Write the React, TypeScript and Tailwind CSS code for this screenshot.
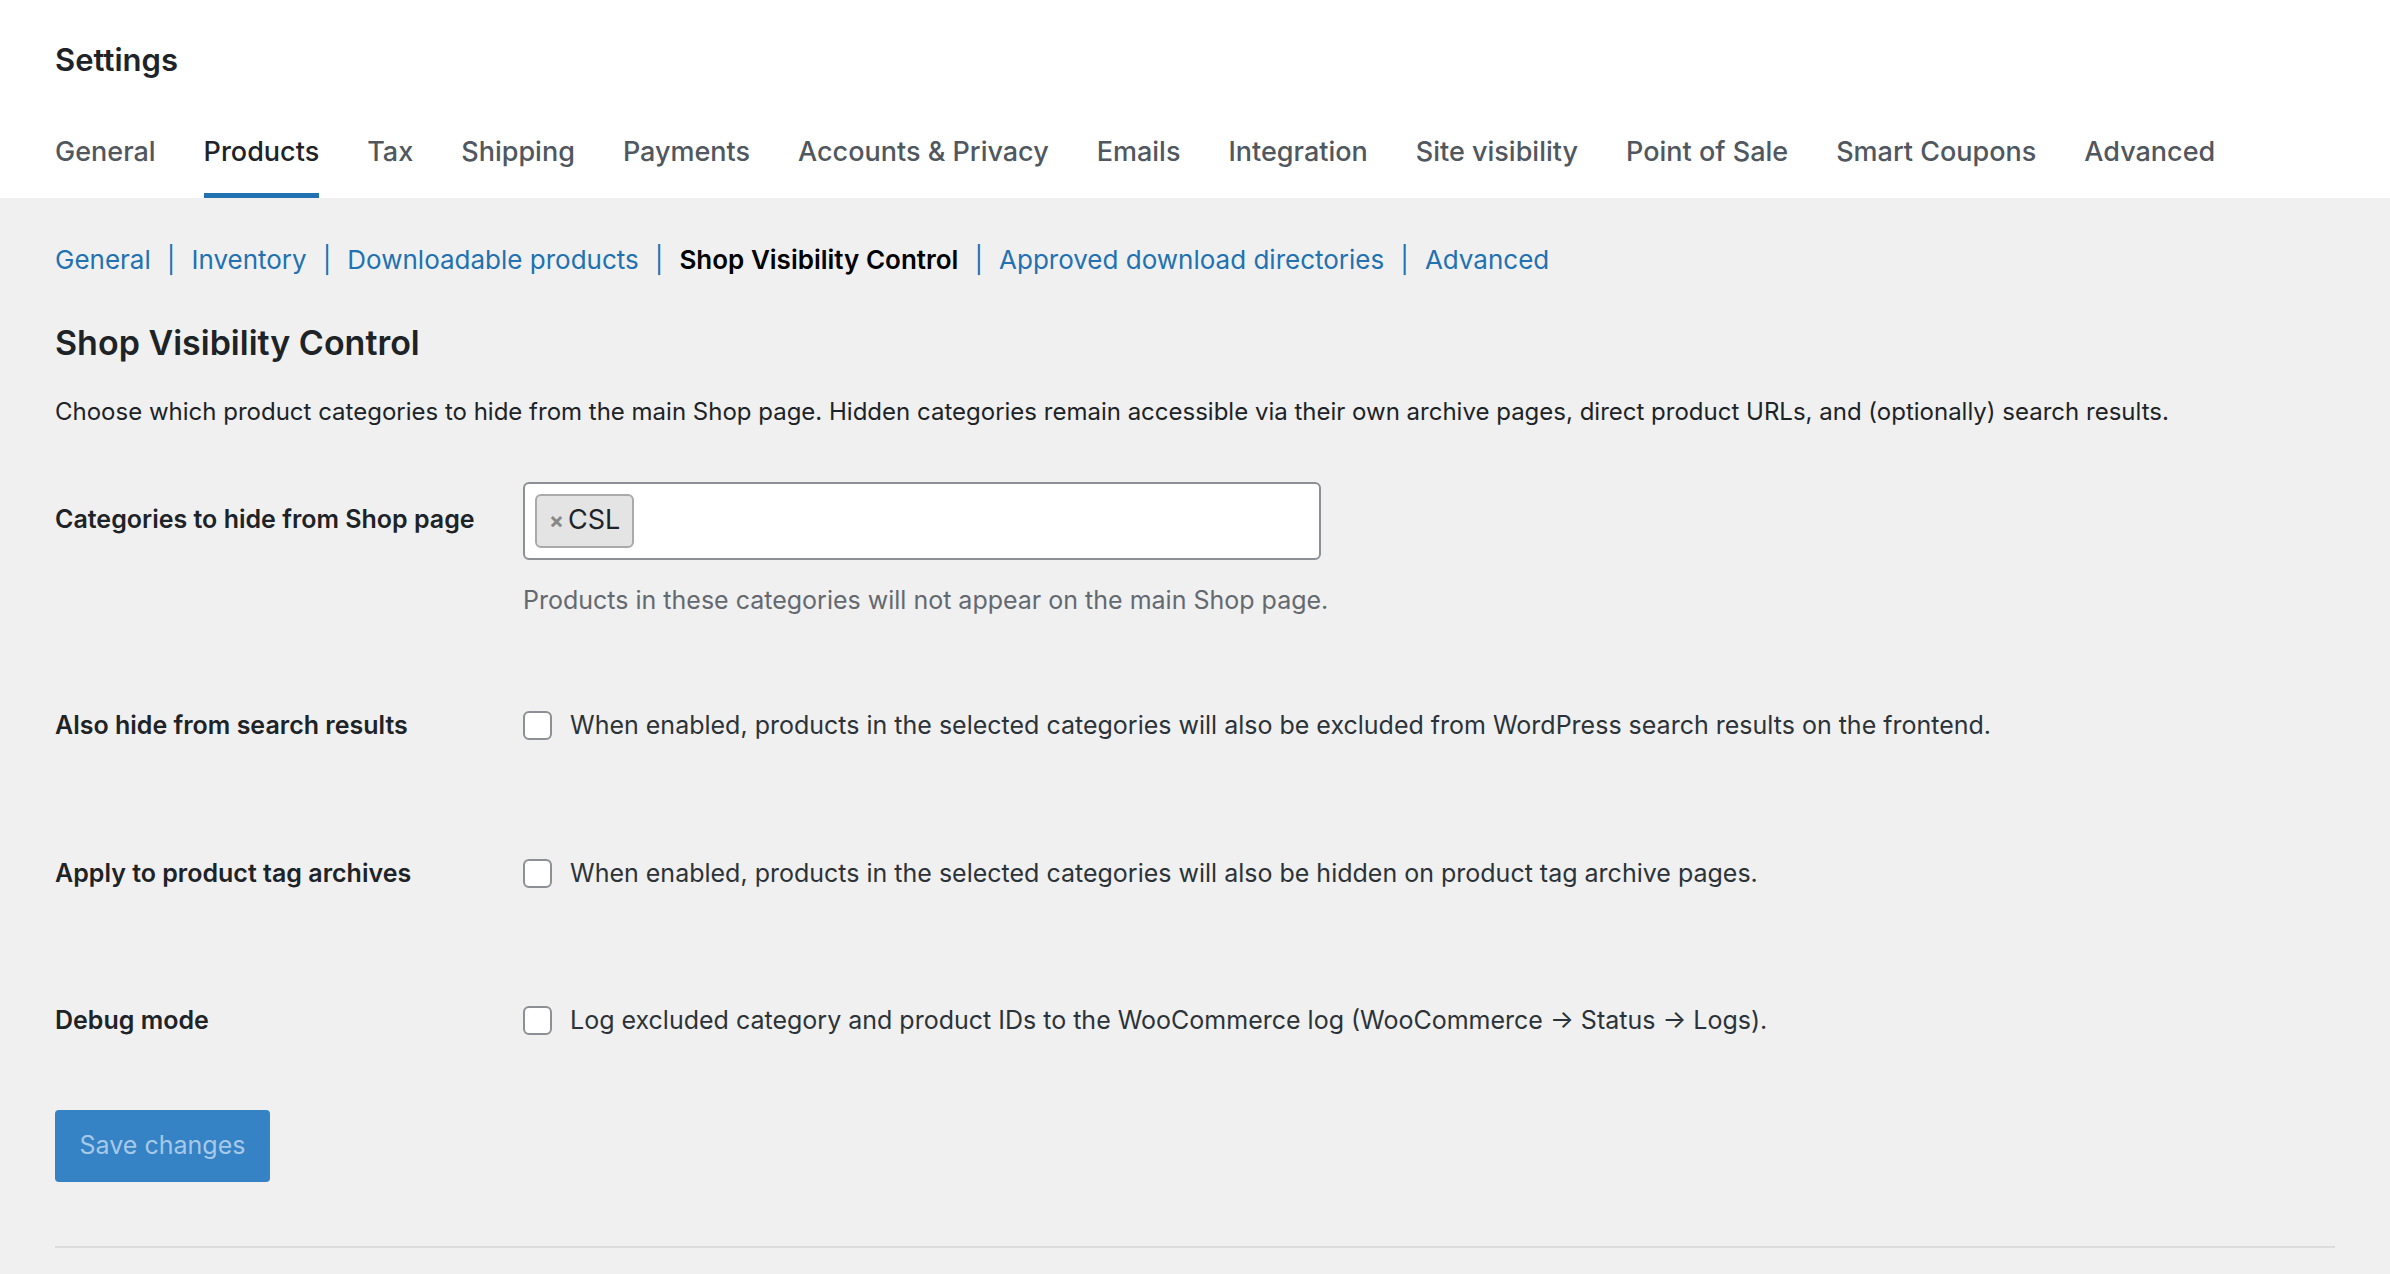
const tabs = ["General", "Products", "Tax", "Shipping", "Payments", "Accounts & Privacy", "Emails", "Integration", "Site visibility", "Point of Sale", "Smart Coupons", "Advanced"];

const subnav = ["General", "Inventory", "Downloadable products", "Shop Visibility Control", "Approved download directories", "Advanced"];

const Checkbox = () => (
  <span className="inline-block w-[29px] h-[29px] shrink-0 rounded-[6px] border-2 border-[#8c8f94] bg-white" />
);

const CheckRow = ({ label, text }: { label: string; text: string }) => (
  <div className="flex items-center py-[30px]">
    <div className="w-[468px] shrink-0 font-semibold text-[#1d2327]">{label}</div>
    <div className="flex items-center gap-[18px] text-[#2c3338]">
      <Checkbox />
      <span>{text}</span>
    </div>
  </div>
);

export default function App() {
  return (
    <div className="min-h-[1274px] bg-[#f0f0f1] text-[25px] text-[#1d2327]" style={{ fontFamily: "Inter, 'Noto Sans', sans-serif" }}>
      <div className="bg-white px-[55px] pt-[40px]">
        <h1 className="text-[31px] font-semibold leading-[40px]">Settings</h1>
        <nav className="flex gap-[48px] mt-[52px] text-[27px] font-medium text-[#50575e]">
          {tabs.map((t) => (
            <div
              key={t}
              className={
                t === "Products"
                  ? "pb-[20px] border-b-[5px] border-[#2271b1] text-[#1d2327]"
                  : "pb-[20px] border-b-[5px] border-transparent"
              }
            >
              {t}
            </div>
          ))}
        </nav>
      </div>

      <div className="px-[55px]">
        <div className="flex items-center mt-[42px] text-[26px]">
          {subnav.map((s, i) => (
            <span key={s} className="flex items-center">
              {i > 0 && <span className="text-[#2271b1] mx-[16px]">|</span>}
              <span className={s === "Shop Visibility Control" ? "font-semibold text-black" : "text-[#2271b1]"}>{s}</span>
            </span>
          ))}
        </div>

        <h2 className="text-[34px] font-semibold mt-[38px]">Shop Visibility Control</h2>
        <p className="mt-[26px] text-[24px] text-[#1d2327]">
          Choose which product categories to hide from the main Shop page. Hidden categories remain accessible via their own archive pages, direct product URLs, and (optionally) search results.
        </p>

        <div className="flex mt-[52px]">
          <div className="w-[468px] shrink-0 font-semibold leading-[38px] pt-[18px]">Categories to hide from Shop page</div>
          <div>
            <div className="w-[798px] h-[78px] bg-white border-2 border-[#8c8f94] rounded-[6px] flex items-center px-[10px]">
              <span className="flex items-center gap-[4px] h-[54px] px-[12px] bg-[#e4e4e4] border-2 border-[#aaa] rounded-[6px] text-[27px]">
                <span className="text-[#888] font-bold text-[22px]">×</span>CSL
              </span>
            </div>
            <p className="mt-[22px] text-[#646970]">Products in these categories will not appear on the main Shop page.</p>
          </div>
        </div>

        <div className="mt-[58px]">
          <CheckRow label="Also hide from search results" text="When enabled, products in the selected categories will also be excluded from WordPress search results on the frontend." />
          <div className="mt-[50px]">
            <CheckRow label="Apply to product tag archives" text="When enabled, products in the selected categories will also be hidden on product tag archive pages." />
          </div>
          <div className="mt-[50px]">
            <CheckRow label="Debug mode" text="Log excluded category and product IDs to the WooCommerce log (WooCommerce → Status → Logs)." />
          </div>
        </div>

        <button className="mt-[40px] w-[215px] h-[72px] rounded-[4px] bg-[#3582c4] text-[#a7c9e8] text-[25px]">Save changes</button>

        <div className="mt-[64px] border-t-2 border-[#dcdcde]" />
      </div>
    </div>
  );
}
